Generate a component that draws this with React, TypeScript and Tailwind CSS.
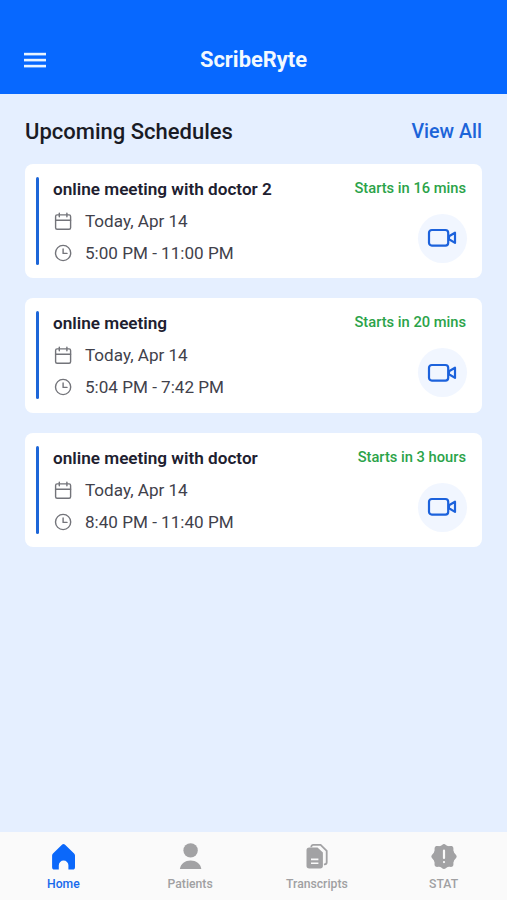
import clsx from "clsx";
import type { ReactNode } from "react";

interface Schedule {
  title: string;
  date: string;
  time: string;
  startsIn: string;
}

const SCHEDULES: Schedule[] = [
  { title: "online meeting with doctor 2", date: "Today, Apr 14", time: "5:00 PM - 11:00 PM", startsIn: "Starts in 16 mins" },
  { title: "online meeting", date: "Today, Apr 14", time: "5:04 PM - 7:42 PM", startsIn: "Starts in 20 mins" },
  { title: "online meeting with doctor", date: "Today, Apr 14", time: "8:40 PM - 11:40 PM", startsIn: "Starts in 3 hours" }
];

function MenuIcon() {
  return (
    <svg width="24" height="18" viewBox="0 0 24 18" fill="#e9f4ff">
      <rect x="1" y="0.8" width="22" height="2.6" />
      <rect x="1" y="6.8" width="22" height="2.6" />
      <rect x="1" y="12.8" width="22" height="2.6" />
    </svg>
  );
}

function CalendarIcon() {
  return (
    <svg width="20" height="20" viewBox="0 0 20 20" fill="none" stroke="#73747a" strokeWidth="1.4" strokeLinecap="round">
      <rect x="2.6" y="2.9" width="15" height="14.3" rx="1.5" />
      <path d="M2.6 8.2h15M6.3 1.1v3.6M13.900 1.1v3.600" />
    </svg>
  );
}

function ClockIcon() {
  return (
    <svg width="20" height="20" viewBox="0 0 20 20" fill="none" stroke="#73747a" strokeWidth="1.4" strokeLinecap="round" strokeLinejoin="round">
      <circle cx="10.1" cy="9" r="7.6" />
      <path d="M10.1 5v4.4h3.9" />
    </svg>
  );
}

function VideoIcon() {
  return (
    <svg width="30" height="20" viewBox="0 0 30 20" fill="none" stroke="#1c62dc" strokeWidth="2.200" strokeLinejoin="round">
      <rect x="2" y="2" width="19.2" height="15.6" rx="2.8" />
      <path d="M22 8.300L28 4.700V14.900L22 11.300z" />
    </svg>
  );
}

function HomeIcon() {
  return (
    <svg width="28" height="28" viewBox="0 0 28 28" fill="#0b68fa">
      <path d="M13.2 1.600a1.800 1.800 0 0 1 2.600 0l9.300 9c.6.6.9 1.200.9 2v11.600c0 1.500-.8 2.300-2.200 2.300h-4.400v-4.200a4.800 4.800 0 0 0-9.600 0v4.200H5.400c-1.500 0-2.300-.8-2.300-2.300V12.600c0-.8.3-1.400.9-2z" />
    </svg>
  );
}

function PatientIcon() {
  return (
    <svg width="28" height="28" viewBox="0 0 28 28" fill="#a2a2a4">
      <circle cx="14.600" cy="7.400" r="7.200" />
      <path d="M3.900 26C4.700 20.500 9.200 17.500 14.600 17.500s9.900 3 10.700 8.500z" />
    </svg>
  );
}

function TranscriptIcon() {
  return (
    <svg width="28" height="28" viewBox="0 0 28 28">
      <path d="M8.300 4.300v-.5a2 2 0 0 1 2-2h7.300l6.100 6v11.500a2 2 0 0 1-2 2h-.8" fill="none" stroke="#a2a2a4" strokeWidth="1.800" />
      <path d="M6.200 4.500h8.300l5.400 5v13.300a2.700 2.700 0 0 1-2.700 2.700h-11a2.700 2.700 0 0 1-2.700-2.700V7.200a2.700 2.700 0 0 1 2.700-2.700z" fill="#a2a2a4" />
      <path d="M8 16.400h7.400M8 20.300h7.400" stroke="#fafafa" strokeWidth="1.600" />
    </svg>
  );
}

function StatIcon() {
  return (
    <svg width="28" height="28" viewBox="0 0 28 28">
      <circle cx="14" cy="13.500" r="10.800" fill="#a2a2a4" />
      <path
        d="M14 1c1.500 0 2.200 1.700 3.700 2.100 1.600.4 3.900-.6 5.100.6s.3 3.500.7 5.100c.4 1.500 3.200 3 3.200 4.700s-2.800 3.200-3.200 4.700c-.4 1.600.5 3.900-.7 5.100s-3.500.2-5.100.6c-1.500.4-2.200 2.100-3.700 2.100s-2.200-1.700-3.700-2.100c-1.600-.4-3.900.6-5.100-.6s-.3-3.500-.7-5.100c-.4-1.500-3.200-3-3.200-4.700s2.800-3.200 3.200-4.700c.4-1.600-.5-3.900.7-5.100s3.500-.2 5.100-.6C11.800 2.700 12.500 1 14 1z"
        fill="#a2a2a4"
      />
      <path d="M14 7.500v7.400M14 19v.1" stroke="#fafafa" strokeWidth="2.200" strokeLinecap="round" />
    </svg>
  );
}

interface Tab {
  label: string;
  icon: ReactNode;
  active?: boolean;
}

const TABS: Tab[] = [
  { label: "Home", icon: <HomeIcon />, active: true },
  { label: "Patients", icon: <PatientIcon /> },
  { label: "Transcripts", icon: <TranscriptIcon /> },
  { label: "STAT", icon: <StatIcon /> }
];

function ScheduleCard({ title, date, time, startsIn }: Schedule) {
  return (
    <article className="flex h-[114.500px] rounded-lg bg-white pl-[11px] pr-[16px] pt-[13px]">
      <div className="h-[88px] w-[3px] shrink-0 rounded-full bg-[#1d66d8]" />
      <div className="ml-[14px] flex-1">
        <h3 className="text-[17.150px] font-semibold leading-[25px] text-[#20202f]">{title}</h3>
        <div className="mt-[7px] flex h-[26px] items-center gap-3 text-[17.100px] text-[#41414b]">
          <CalendarIcon />
          <span>{date}</span>
        </div>
        <div className="mt-[6px] flex h-[26px] items-center gap-3 text-[17.100px] text-[#41414b]">
          <ClockIcon />
          <span>{time}</span>
        </div>
      </div>
      <div className="flex flex-col items-end">
        <p className="text-[14.700px] font-medium leading-[23px] text-[#2ba349]">{startsIn}</p>
        <button className="-mr-[0.700px] mt-[14px] flex size-[49px] items-center justify-center rounded-full bg-[#f1f6ff]">
          <VideoIcon />
        </button>
      </div>
    </article>
  );
}

export default function App() {
  return (
    <div className="flex h-[900px] w-[507px] flex-col overflow-hidden bg-[#e5efff] font-['Roboto',sans-serif]">
      <header className="grid h-[93.500px] shrink-0 grid-cols-3 items-center bg-[#0768ff] px-[23px] pt-[28px]">
        <button className="justify-self-start" aria-label="Menu">
          <MenuIcon />
        </button>
        <h1 className="justify-self-center text-[21.900px] font-bold text-[#f2f9ff]">ScribeRyte</h1>
      </header>

      <main className="flex-1 px-[25px] pt-[22px]">
        <div className="flex h-8 items-center justify-between">
          <h2 className="text-[22px] font-medium text-[#191b25]">Upcoming Schedules</h2>
          <a className="text-[19.600px] font-medium leading-6 text-[#1c64d9]">View All</a>
        </div>
        <div className="mt-4 flex flex-col gap-5">
          {SCHEDULES.map((schedule) => (
            <ScheduleCard key={schedule.title} {...schedule} />
          ))}
        </div>
      </main>

      <nav className="grid h-[68.500px] shrink-0 grid-cols-4 bg-[#fafafa] pt-[11px]">
        {TABS.map(({ label, icon, active }) => (
          <div
            key={label}
            className={clsx("flex flex-col items-center gap-[5px] text-[12.200px] font-medium", active ? "text-[#1769ec]" : "text-[#a0a0a2]")}
          >
            {icon}
            <span className="leading-4">{label}</span>
          </div>
        ))}
      </nav>
    </div>
  );
}
